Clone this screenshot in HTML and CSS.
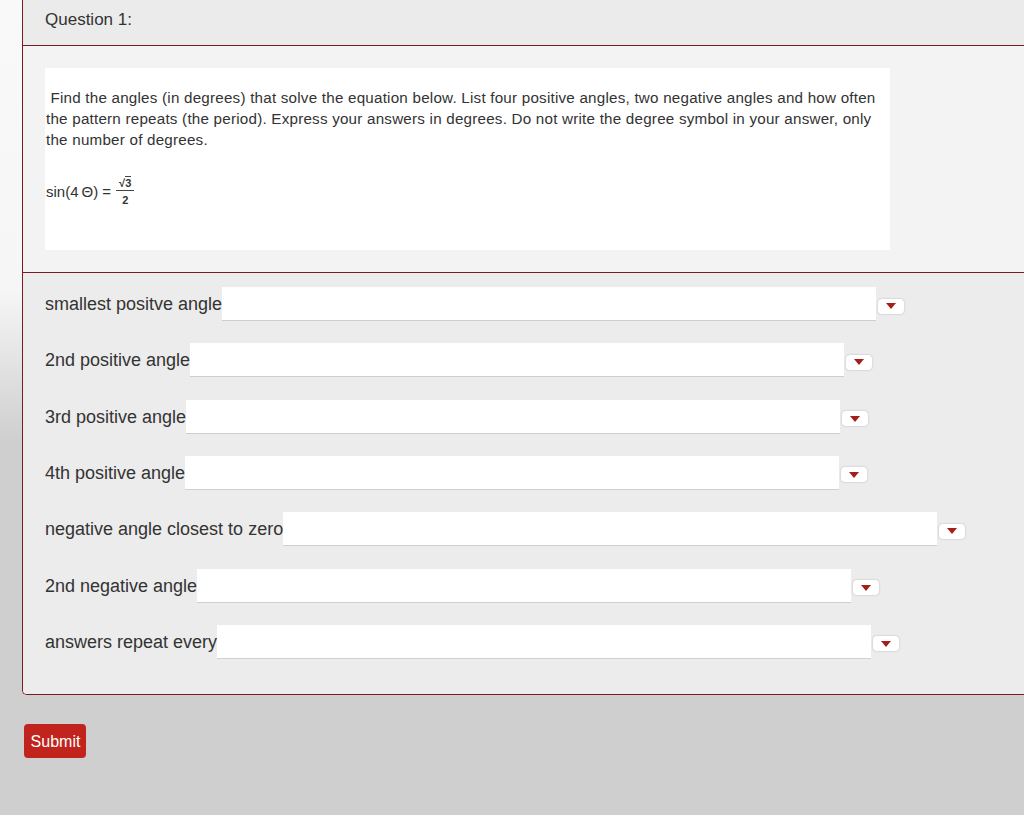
FILE: index.html
```html
<!DOCTYPE html>
<html lang="en">
<head>
  <meta charset="UTF-8" />
  <title>Question 1</title>
  <link rel="stylesheet" href="styles.css">
</head>
<body>

  <div class="card">
    <div class="card-head">Question 1:</div>

    <div class="question">
      <div class="prompt">
        <p>&nbsp;Find the angles (in degrees) that solve the equation below. List four positive angles, two negative angles and how often the pattern repeats (the period). Express your answers in degrees. Do not write the degree symbol in your answer, only the number of degrees.</p>
        <div class="eq">
          <span>sin(4&thinsp;&Theta;) =</span>
          <span class="frac">
            <span class="num">&radic;<span class="rad">3</span></span>
            <span class="den">2</span>
          </span>
        </div>
      </div>
    </div>

    <div class="answers">
      <div class="row">
        <label>smallest positve angle</label>
        <input type="text" />
        <button class="drop"><span class="tri"></span></button>
      </div>
      <div class="row">
        <label>2nd positive angle</label>
        <input type="text" />
        <button class="drop"><span class="tri"></span></button>
      </div>
      <div class="row">
        <label>3rd positive angle</label>
        <input type="text" />
        <button class="drop"><span class="tri"></span></button>
      </div>
      <div class="row">
        <label>4th positive angle</label>
        <input type="text" />
        <button class="drop"><span class="tri"></span></button>
      </div>
      <div class="row">
        <label>negative angle closest to zero</label>
        <input type="text" />
        <button class="drop"><span class="tri"></span></button>
      </div>
      <div class="row">
        <label>2nd negative angle</label>
        <input type="text" />
        <button class="drop"><span class="tri"></span></button>
      </div>
      <div class="row">
        <label>answers repeat every</label>
        <input type="text" />
        <button class="drop"><span class="tri"></span></button>
      </div>
    </div>
  </div>

  <button class="submit">Submit</button>

</body>
</html>
```

FILE: styles.css
```css
html {
  min-height: 100%;
  background: #cfcfcf linear-gradient(180deg, #f9f9f9 0, #f6f6f6 290px, #cfcfcf 440px) no-repeat;
}

body {
  margin: 0;
  font-family: 'Liberation Sans', Arial, sans-serif;
  color: #333;
  overflow: hidden;
}

.card {
  margin-left: 22px;
  border-left: 1px solid #7a1a24;
  border-bottom: 1px solid #7a1a24;
  border-bottom-left-radius: 5px;
  overflow: hidden;
}

.card-head {
  height: 46px;
  line-height: 39px;
  padding: 0 22px;
  font-size: 17px;
  background: #ebebeb;
  border-bottom: 1px solid #7a1a24;
  box-sizing: border-box;
}

.question {
  background: #f3f3f3;
  padding: 22px;
  border-bottom: 1px solid #7a1a24;
}

.prompt {
  background: #fff;
  width: 845px;
  height: 182px;
  box-sizing: border-box;
  padding: 19px 0 0 1px;
  font-size: 15.2px;
  color: #333;
}

.prompt p {
  margin: 0;
  line-height: 21px;
  letter-spacing: 0.22px;
}

.eq {
  display: flex;
  align-items: center;
  gap: 5px;
  margin-top: 27px;
  font-size: 15px;
}

.frac {
  display: inline-flex;
  flex-direction: column;
  align-items: center;
  font-size: 11px;
  font-weight: bold;
  line-height: 12px;
}

.num {
  padding: 0 3px 1px;
  border-bottom: 1px solid #444;
}

.rad {
  border-top: 1px solid #444;
}

.den {
  padding-top: 3px;
}

.answers {
  background: #ececec;
  padding: 14px 22px 35px;
  display: flex;
  flex-direction: column;
  gap: 22.33px;
}

.row {
  display: flex;
  align-items: center;
  height: 34px;
}

.row label {
  font-size: 18px;
  white-space: nowrap;
  padding-top: 1px;
}

.row input {
  width: 654px;
  height: 34px;
  box-sizing: border-box;
  border: none;
  border-bottom: 1px solid #cfcfcf;
  background: #fff;
  outline: none;
  padding: 0 8px;
}

.drop {
  margin: 4px 0 0 2px;
  width: 26px;
  height: 15px;
  padding: 0;
  border: none;
  border-radius: 4px;
  background: #fff;
  box-shadow: 0 0 2px rgba(0, 0, 0, 0.25);
  display: flex;
  align-items: center;
  justify-content: center;
}

.tri {
  width: 0;
  height: 0;
  border-left: 5px solid transparent;
  border-right: 5px solid transparent;
  border-top: 6px solid #a31f19;
}

.submit {
  display: block;
  margin: 29px 0 0 24px;
  width: 62px;
  height: 34px;
  padding: 0 0 0 1px;
  border: none;
  border-radius: 4px;
  background: #c0241c;
  color: #fff;
  font-family: 'Liberation Sans', Arial, sans-serif;
  font-size: 16px;
  line-height: 36px;
}
```
